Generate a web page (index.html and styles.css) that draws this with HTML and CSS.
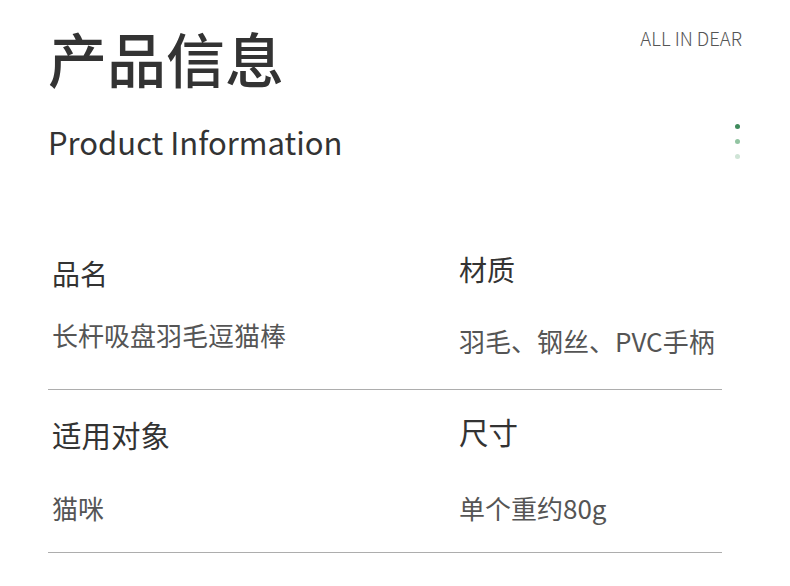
FILE: index.html
```html
<!DOCTYPE html>
<html lang="zh-CN">
<head>
<meta charset="utf-8">
<title>产品信息</title>
<link rel="stylesheet" href="styles.css">
</head>
<body>
<div class="page">
  <header class="head">
    <div class="titles">
      <h1 class="title">产品信息</h1>
      <p class="subtitle">Product Information</p>
    </div>
    <div class="brand">
      <span class="brand-name">ALL IN DEAR</span>
      <div class="dots">
        <i class="dot dot-1"></i>
        <i class="dot dot-2"></i>
        <i class="dot dot-3"></i>
      </div>
    </div>
  </header>
  <section class="specs">
    <div class="row row-1">
      <div class="cell">
        <div class="label">品名</div>
        <div class="value">长杆吸盘羽毛逗猫棒</div>
      </div>
      <div class="cell cell-right">
        <div class="label">材质</div>
        <div class="value">羽毛、钢丝、PVC手柄</div>
      </div>
    </div>
    <div class="row row-2">
      <div class="cell">
        <div class="label">适用对象</div>
        <div class="value">猫咪</div>
      </div>
      <div class="cell cell-right">
        <div class="label">尺寸</div>
        <div class="value">单个重约80g</div>
      </div>
    </div>
  </section>
</div>
</body>
</html>
```

FILE: styles.css
```css
* { box-sizing: border-box; }
html, body { margin: 0; padding: 0; background: #ffffff; }
body {
  font-family: "Noto Sans CJK SC", "Noto Sans", sans-serif;
  color: #333333;
  width: 790px;
  height: 586px;
  overflow: hidden;
}
.page {
  padding: 0 48px 0 48px;
}
.head {
  display: flex;
  justify-content: space-between;
  align-items: flex-start;
}
.title {
  margin: 28px 0 0 0;
  font-size: 59px;
  line-height: 59px;
  font-weight: 500;
  color: #333333;
}
.subtitle {
  margin: 38.5px 0 0 0;
  font-size: 31px;
  line-height: 31px;
  font-weight: 400;
  color: #333333;
}
.brand {
  display: flex;
  flex-direction: column;
  align-items: flex-end;
  padding-top: 29px;
}
.brand-name {
  font-size: 18.5px;
  line-height: 18.5px;
  font-weight: 300;
  color: #555555;
}
.dots {
  display: flex;
  flex-direction: column;
  gap: 10px;
  margin-top: 76px;
  margin-right: 2px;
}
.dot {
  display: block;
  width: 5px;
  height: 5px;
  border-radius: 50%;
}
.dot-1 { background: #3f8b5c; }
.dot-2 { background: #92c4a2; }
.dot-3 { background: #cfe4d6; }

.specs {
  margin-top: 100px;
  width: 674px;
}
.row {
  display: grid;
  grid-template-columns: 407px 1fr;
  border-bottom: 1px solid #adadad;
}
.cell { padding-left: 4px; }
.label {
  font-size: 28px;
  line-height: 28px;
  color: #333333;
}
.value {
  font-size: 26px;
  line-height: 26px;
  color: #555555;
}
.row-1 { padding-bottom: 35px; }
.row-1 .value { margin-top: 35px; }
.row-1 .cell-right .label { margin-top: -4px; }
.row-1 .cell-right .value { margin-top: 45px; }

.row-2 { padding-top: 30px; padding-bottom: 31px; }
.row-2 .label { font-size: 29.5px; line-height: 29.5px; }
.row-2 .value { margin-top: 45.5px; }
.row-2 .cell-right .label { margin-top: -3px; }
.row-2 .cell-right .value { margin-top: 48.5px; }
```
